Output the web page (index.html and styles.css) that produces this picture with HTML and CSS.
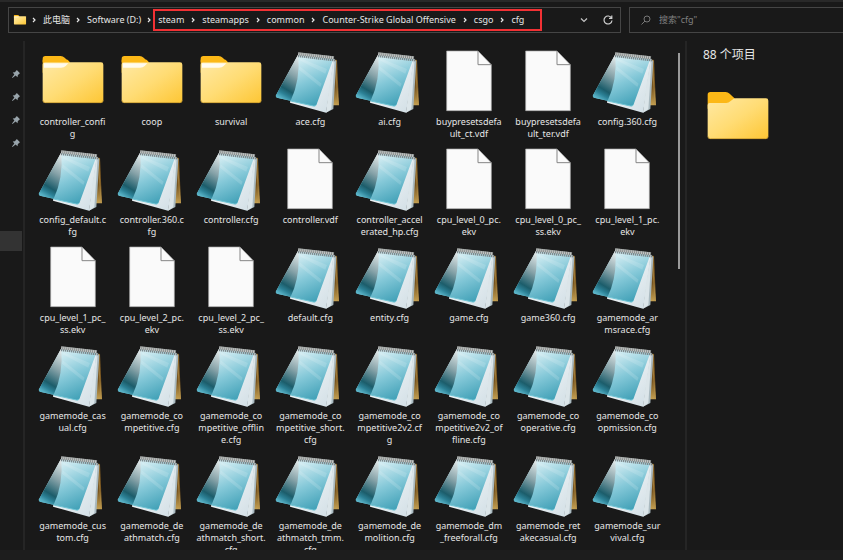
FILE: index.html
```html
<!DOCTYPE html>
<html lang="zh-CN">

<head>
  <meta charset="UTF-8">
  <meta name="viewport" content="width=device-width, initial-scale=1.0">
  <title>cfg</title>
  <link rel="stylesheet" href="styles.css">
</head>

<body>
  <!-- Icon shapes -->
  <svg class="sprite" aria-hidden="true">
    <defs>
      <linearGradient id="front" x1="0" y1="0" x2="1" y2="1">
        <stop offset="0" stop-color="#ffe9a4" />
        <stop offset="0.5" stop-color="#ffdc74" />
        <stop offset="1" stop-color="#fdc634" />
      </linearGradient>
      <linearGradient id="sheet" x1="0" y1="0" x2="0" y2="1">
        <stop offset="0" stop-color="#ffffff" />
        <stop offset="1" stop-color="#ffe9a4" />
      </linearGradient>
      <linearGradient id="cover" x1="0.1" y1="0" x2="0.6" y2="1">
        <stop offset="0" stop-color="#eaf6f9" />
        <stop offset="0.25" stop-color="#c9e8ef" />
        <stop offset="0.6" stop-color="#84c8d8" />
        <stop offset="1" stop-color="#45a3b9" />
      </linearGradient>
      <linearGradient id="flap" x1="0.7" y1="0" x2="0.4" y2="1">
        <stop offset="0" stop-color="#dde5e6" />
        <stop offset="0.4" stop-color="#86a2a8" />
        <stop offset="0.76" stop-color="#1c5d6b" />
        <stop offset="0.88" stop-color="#2c8196" />
        <stop offset="1" stop-color="#59b3c7" />
      </linearGradient>
      <linearGradient id="page" x1="0" y1="0" x2="1" y2="1">
        <stop offset="0" stop-color="#ffffff" />
        <stop offset="1" stop-color="#cfdde4" />
      </linearGradient>
      <linearGradient id="back" x1="0" y1="0" x2="0" y2="1">
        <stop offset="0" stop-color="#8c6425" />
        <stop offset="0.6" stop-color="#76531e" />
        <stop offset="1" stop-color="#c4a052" />
      </linearGradient>
    </defs>

    <symbol id="folder" viewBox="0 0 210 192">
      <path d="M14 29q0-8 8-8h46q7 0 12 5l16 15v30H14z" fill="#fcb817" />
      <path d="M14 47q0-7 7-7h168q7 0 7 7v107q0 8-8 8H22q-8 0-8-8z" fill="url(#front)" />
      <path d="M14 40h82l-7-8H14z" fill="#fcb817" />
      <path d="M18 43h73l-8 8q-5 5-14 5H18z" fill="#fff" opacity="0.85" />
      <path d="M15 154q0 7 7 7h166q7 0 7-7" fill="none" stroke="#b58a24" stroke-width="2" />
    </symbol>

    <symbol id="folder-plain" viewBox="0 0 210 192">
      <path d="M14 29q0-8 8-8h46q7 0 12 5l16 15v30H14z" fill="#fcb817" />
      <path d="M14 60q0-6 6-6h50q7 0 12-5l6-5q5-4 10-4h91q7 0 7 7v107q0 8-8 8H22q-8 0-8-8z" fill="url(#front)" />
      <path d="M15 154q0 7 7 7h166q7 0 7-7" fill="none" stroke="#b58a24" stroke-width="2" />
    </symbol>

    <symbol id="file" viewBox="0 0 210 192">
      <path d="M38 6h94l40 41v138H38z" fill="#fafafa" stroke="#a9a9a9" stroke-width="2" />
      <path d="M132 6v41h40" fill="none" stroke="#858585" stroke-width="3" />
    </symbol>

    <symbol id="notepad" viewBox="0 0 210 192">
      <path d="M174 31l12 2 6 136h-18z" fill="url(#back)" />
      <path d="M181 34l8 134" stroke="#b48f49" stroke-width="2" />
      <path d="M70 16l110 14-27 161-108-30z" fill="url(#page)" />
      <path d="M176 30l8 6-9 144-22 11 12-80z" fill="#a9b9bf" />
      <path d="M176 32l3 1-10 148-16 10 10-80z" fill="#dbe5e9" />
      <path d="M70 16l105 13-50 137q-3 7-10 5L6 146q-5-2-3-7z" fill="url(#cover)" />
      <path d="M70 16q6 80-23 139L6 146q-5-2-3-7z" fill="url(#flap)" />
      <path d="M76 28l80 32-5 14-77-40zM74 52l66 52-4 10-64-52z" fill="#fff" opacity="0.14" />
      <path d="M47 156l68 15q7 2 10-5" fill="none" stroke="#70c5d5" stroke-width="3" />
      <path d="M69 21l111 13" stroke="#7d898d" stroke-width="7" stroke-dasharray="4 2" />
      <path d="M70 14l107 12" stroke="#858a89" stroke-width="9" />
      <path d="M70 14l107 12" stroke="#c9cccb" stroke-width="8" stroke-dasharray="3 3" />
    </symbol>

    <symbol id="chevron" viewBox="0 0 8 8">
      <path d="M3 2l2 2-2 2" fill="none" stroke="#e8e8e8" stroke-width="1.200" />
    </symbol>

    <symbol id="pin" viewBox="0 0 10 10">
      <path d="M5.800 1L9 4.200 8 5 6.800 6.200 6.500 8.300 4.600 6.600 1.500 9 1 8.500 3.400 5.400 1.700 3.500 3.800 3.200 5 2z" fill="#98a4ab" />
    </symbol>
  </svg>

  <!-- Address bar and search -->
  <header class="toolbar">
    <nav class="address">
      <svg class="address-icon"><use href="#folder" /></svg>
      <svg class="chevron"><use href="#chevron" /></svg>
      <a href="#">此电脑</a>
      <svg class="chevron"><use href="#chevron" /></svg>
      <a href="#">Software (D:)</a>
      <svg class="chevron"><use href="#chevron" /></svg>
      <div class="highlight">
        <a href="#">steam</a>
        <svg class="chevron"><use href="#chevron" /></svg>
        <a href="#">steamapps</a>
        <svg class="chevron"><use href="#chevron" /></svg>
        <a href="#">common</a>
        <svg class="chevron"><use href="#chevron" /></svg>
        <a href="#">Counter-Strike Global Offensive</a>
        <svg class="chevron"><use href="#chevron" /></svg>
        <a href="#">csgo</a>
        <svg class="chevron"><use href="#chevron" /></svg>
        <a href="#">cfg</a>
      </div>
      <div class="address-actions">
        <button type="button" aria-label="历史记录">
          <svg viewBox="0 0 12 12"><path d="M3 4.500l3 3 3-3" fill="none" stroke="#c4c4c4" stroke-width="1.200" /></svg>
        </button>
        <button type="button" aria-label="刷新">
          <svg viewBox="0 0 12 12"><path d="M9.500 4A4 4 0 1 0 10 6.500M9.800 1.500v2.800H7" fill="none" stroke="#d0d0d0" stroke-width="1.200" /></svg>
        </button>
      </div>
    </nav>
    <label class="search">
      <svg viewBox="0 0 12 12"><circle cx="7" cy="5" r="3" fill="none" stroke="#777" /><path d="M5 7l-3.500 3.500" stroke="#777" /></svg>
      <input type="search" placeholder='搜索"cfg"' aria-label="搜索">
    </label>
  </header>

  <div class="explorer">
    <!-- Navigation pane -->
    <aside class="sidebar">
      <div class="pins">
        <svg><use href="#pin" /></svg>
        <svg><use href="#pin" /></svg>
        <svg><use href="#pin" /></svg>
        <svg><use href="#pin" /></svg>
      </div>
      <div class="selected"></div>
    </aside>

    <!-- Files -->
    <main class="files">
      <div class="item"><svg><use href="#folder" /></svg><p>controller_confi<br>g</p></div>
      <div class="item"><svg><use href="#folder" /></svg><p>coop</p></div>
      <div class="item"><svg><use href="#folder" /></svg><p>survival</p></div>
      <div class="item"><svg><use href="#notepad" /></svg><p>ace.cfg</p></div>
      <div class="item"><svg><use href="#notepad" /></svg><p>ai.cfg</p></div>
      <div class="item"><svg><use href="#file" /></svg><p>buypresetsdefa<br>ult_ct.vdf</p></div>
      <div class="item"><svg><use href="#file" /></svg><p>buypresetsdefa<br>ult_ter.vdf</p></div>
      <div class="item"><svg><use href="#notepad" /></svg><p>config.360.cfg</p></div>

      <div class="item"><svg><use href="#notepad" /></svg><p>config_default.c<br>fg</p></div>
      <div class="item"><svg><use href="#notepad" /></svg><p>controller.360.c<br>fg</p></div>
      <div class="item"><svg><use href="#notepad" /></svg><p>controller.cfg</p></div>
      <div class="item"><svg><use href="#file" /></svg><p>controller.vdf</p></div>
      <div class="item"><svg><use href="#notepad" /></svg><p>controller_accel<br>erated_hp.cfg</p></div>
      <div class="item"><svg><use href="#file" /></svg><p>cpu_level_0_pc.<br>ekv</p></div>
      <div class="item"><svg><use href="#file" /></svg><p>cpu_level_0_pc_<br>ss.ekv</p></div>
      <div class="item"><svg><use href="#file" /></svg><p>cpu_level_1_pc.<br>ekv</p></div>

      <div class="item"><svg><use href="#file" /></svg><p>cpu_level_1_pc_<br>ss.ekv</p></div>
      <div class="item"><svg><use href="#file" /></svg><p>cpu_level_2_pc.<br>ekv</p></div>
      <div class="item"><svg><use href="#file" /></svg><p>cpu_level_2_pc_<br>ss.ekv</p></div>
      <div class="item"><svg><use href="#notepad" /></svg><p>default.cfg</p></div>
      <div class="item"><svg><use href="#notepad" /></svg><p>entity.cfg</p></div>
      <div class="item"><svg><use href="#notepad" /></svg><p>game.cfg</p></div>
      <div class="item"><svg><use href="#notepad" /></svg><p>game360.cfg</p></div>
      <div class="item"><svg><use href="#notepad" /></svg><p>gamemode_ar<br>msrace.cfg</p></div>

      <div class="item"><svg><use href="#notepad" /></svg><p>gamemode_cas<br>ual.cfg</p></div>
      <div class="item"><svg><use href="#notepad" /></svg><p>gamemode_co<br>mpetitive.cfg</p></div>
      <div class="item"><svg><use href="#notepad" /></svg><p>gamemode_co<br>mpetitive_offlin<br>e.cfg</p></div>
      <div class="item"><svg><use href="#notepad" /></svg><p>gamemode_co<br>mpetitive_short.<br>cfg</p></div>
      <div class="item"><svg><use href="#notepad" /></svg><p>gamemode_co<br>mpetitive2v2.cf<br>g</p></div>
      <div class="item"><svg><use href="#notepad" /></svg><p>gamemode_co<br>mpetitive2v2_of<br>fline.cfg</p></div>
      <div class="item"><svg><use href="#notepad" /></svg><p>gamemode_co<br>operative.cfg</p></div>
      <div class="item"><svg><use href="#notepad" /></svg><p>gamemode_co<br>opmission.cfg</p></div>

      <div class="item"><svg><use href="#notepad" /></svg><p>gamemode_cus<br>tom.cfg</p></div>
      <div class="item"><svg><use href="#notepad" /></svg><p>gamemode_de<br>athmatch.cfg</p></div>
      <div class="item"><svg><use href="#notepad" /></svg><p>gamemode_de<br>athmatch_short.<br>cfg</p></div>
      <div class="item"><svg><use href="#notepad" /></svg><p>gamemode_de<br>athmatch_tmm.<br>cfg</p></div>
      <div class="item"><svg><use href="#notepad" /></svg><p>gamemode_de<br>molition.cfg</p></div>
      <div class="item"><svg><use href="#notepad" /></svg><p>gamemode_dm<br>_freeforall.cfg</p></div>
      <div class="item"><svg><use href="#notepad" /></svg><p>gamemode_ret<br>akecasual.cfg</p></div>
      <div class="item"><svg><use href="#notepad" /></svg><p>gamemode_sur<br>vival.cfg</p></div>
    </main>

    <div class="scrollbar">
      <div class="thumb"></div>
    </div>

    <!-- Details pane -->
    <aside class="details">
      <h2>88 个项目</h2>
      <svg><use href="#folder-plain" /></svg>
    </aside>
  </div>

  <footer class="statusbar"></footer>
</body>

</html>
```

FILE: styles.css
```css
* {
  box-sizing: border-box;
}

body {
  display: flex;
  flex-direction: column;
  height: 100vh;
  margin: 0;
  overflow: hidden;
  border-top: 2px solid #292929;
  background-color: #191919;
  color: #e6e6e6;
  font-family: "Noto Sans", "Noto Sans CJK SC", sans-serif;
  font-size: 9px;
  line-height: 12px;
}

svg {
  display: block;
  flex: none;
}

.sprite {
  position: absolute;
  width: 0;
  height: 0;
}

/* Toolbar */
.toolbar {
  display: flex;
  gap: 8px;
  padding: 5px 0 8px 8px;
}

.address {
  display: flex;
  align-items: center;
  flex: 1;
  height: 26px;
  padding-left: 4px;
  border: 1px solid #454545;
  white-space: nowrap;
}

.address a {
  color: inherit;
  text-decoration: none;
}

.address-icon {
  width: 14px;
  height: 14px;
}

.chevron {
  width: 8px;
  height: 8px;
  margin: 0 5px;
}

.address > .chevron {
  margin: 0 5px 0 4px;
}

.address > .chevron:last-of-type {
  margin-right: 0;
}

.address-icon + .chevron {
  margin-left: 3px;
}

.highlight {
  display: flex;
  align-items: center;
  height: 22px;
  padding: 0 16px 0 3px;
  border: 2px solid #f23134;
}

.address-actions {
  display: flex;
  gap: 12px;
  margin-left: auto;
  padding-right: 6px;
}

.address-actions button {
  padding: 0;
  border: none;
  background: none;
}

.address-actions svg,
.search svg {
  width: 12px;
  height: 12px;
}

.search {
  display: flex;
  align-items: center;
  width: 214px;
  gap: 7px;
  height: 26px;
  padding-left: 10px;
  border: 1px solid #454545;
  border-right: none;
}

.search input {
  flex: 1;
  min-width: 0;
  padding: 0;
  border: none;
  outline: none;
  background: none;
  color: #e6e6e6;
  font: inherit;
}

.search input::placeholder {
  color: #808080;
}

/* Panes */
.explorer {
  display: flex;
  flex: 1;
  min-height: 0;
}

.sidebar {
  width: 25px;
  border-right: 2px solid #252525;
}

.pins {
  display: flex;
  flex-direction: column;
  gap: 13px;
  padding: 28px 0 0 11px;
}

.pins svg {
  width: 10px;
  height: 10px;
}

.selected {
  height: 20px;
  margin: 83px 1px 0 0;
  background-color: #333333;
}

.files {
  display: grid;
  grid-template-columns: repeat(8, 1fr);
  align-content: start;
  flex: 1;
  row-gap: 7px;
  min-width: 0;
  padding: 8px 7px 0 8px;
  overflow: hidden;
}

.item {
  display: flex;
  flex-direction: column;
  align-items: center;
  gap: 3px;
}

.item svg,
.details svg {
  width: 70px;
  height: 64px;
}

.item p {
  margin: 0;
  text-align: center;
  white-space: nowrap;
}

.scrollbar {
  width: 11px;
  padding: 12px 0 0 4px;
}

.thumb {
  width: 2px;
  height: 216px;
  background-color: #9a9a9a;
}

.details {
  width: 158px;
  padding: 6px 0 0 16px;
  border-left: 2px solid #252525;
}

.details h2 {
  margin: 0 0 22px;
  font-size: 12px;
  font-weight: normal;
  line-height: 16px;
}

.statusbar {
  height: 10px;
  background-color: #1d1d1d;
}
```
